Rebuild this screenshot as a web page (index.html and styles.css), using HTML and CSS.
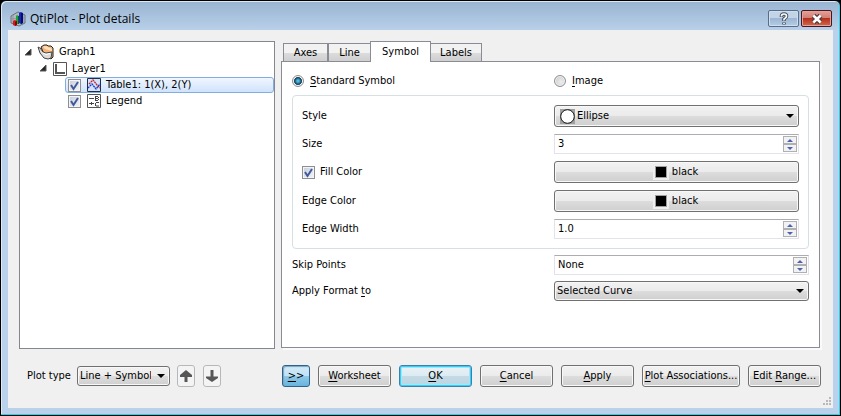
FILE: index.html
```html
<!DOCTYPE html>
<html lang="en">
<head>
<meta charset="utf-8">
<title>QtiPlot - Plot details</title>
<link rel="stylesheet" href="styles.css">
</head>
<body>
<div class="window">
  <header class="titlebar">
    <svg class="app-icon" viewBox="0 0 16 16" aria-hidden="true">
      <path d="M1 5l7-4 7 3v8l-6 3-8-3z" fill="#b4bac2" stroke="#6a7078"/>
      <path d="M3 4v8M1 8l13-1M13 4v8" fill="none" stroke="#8d949c"/>
      <path d="M9 2l2-1 2 1v10l-2 1-2-1z" fill="#1a22c8"/><path d="M11 2v11l2-1V2z" fill="#070c70"/>
      <path d="M6 5l1-1 2 1v8H6z" fill="#18a834"/><path d="M8 5h1v8H8z" fill="#0c5a1c"/>
      <path d="M3 10l2-1 2 1v4l-2 1-2-1z" fill="#dc1616"/><path d="M5 11l2-1v4l-2 1z" fill="#7d0808"/>
    </svg>
    <h1 class="title">QtiPlot - Plot details</h1>
    <button class="caption-btn" type="button" aria-label="Help">
      <svg width="12" height="14" viewBox="0 0 12 14"><path d="M3.500 5V4q0-2 2.500-2t2.500 2q0 1.500-1.500 2.200T6 8.500V9M6 10.500v2" fill="none" stroke="#4a5361" stroke-width="3.600"/><path d="M3.500 4.600V4q0-2 2.500-2t2.500 2q0 1.500-1.500 2.200T6 8.500M6 10.900v1.200" fill="none" stroke="#fff" stroke-width="1.600"/></svg>
    </button>
    <button class="caption-btn close" type="button" aria-label="Close">
      <svg width="14" height="12" viewBox="0 0 14 12"><path d="M3.500 2.500l7 7M10.500 2.500l-7 7" stroke="#50393c" stroke-width="5"/><path d="M3.300 2.500l7.400 7M10.700 2.500l-7.400 7" stroke="#fff" stroke-width="2.600"/></svg>
    </button>
  </header>

  <main class="content">
    <div class="main">
      <ul class="tree">
        <li class="node level1">
          <svg class="twisty" viewBox="0 0 7 7"><path d="M6 0v6H0z" fill="#262626" stroke="#595959"/></svg>
          <svg class="folder" viewBox="0 0 18 16"><path d="M4 3l3-2h3l1 1h3l2 2v9l-2 2-7-5z" fill="#f7b273" stroke="#222"/><path d="M6 2.500l3-.5 6 3v2L8 5z" fill="#fde0bd"/><path d="M1 3l2 1 3 4 3 1 6-1-1 6-3 1-4-1-4-5z" fill="#dcdcdc" stroke="#444"/><path d="M6 9l3 1.500 4-1" fill="none" stroke="#fff"/></svg>
          <span>Graph1</span>
        </li>
        <li class="node level2">
          <svg class="twisty" viewBox="0 0 7 7"><path d="M6 0v6H0z" fill="#262626" stroke="#595959"/></svg>
          <svg class="node-icon" viewBox="0 0 14 14"><path d="M.5.5h13v13H.5z" fill="#fff" stroke="#555"/><path d="M3 2v9h9" fill="none" stroke="#555" stroke-width="2"/></svg>
          <span>Layer1</span>
        </li>
        <li class="node level3 selected">
          <span class="check"><input type="checkbox" id="curve" checked><svg viewBox="0 0 13 13"><path d="M3 6l2.500 4L10 3" fill="none" stroke="#41599c" stroke-width="2"/></svg></span>
          <svg class="node-icon" viewBox="0 0 14 14"><path d="M.5.500h13v13H.5z" fill="#d3e4f8" stroke="#1b2f4d"/><path d="M2 6l4-4 4 5 3 3" fill="none" stroke="#d02030" stroke-width="1.300" stroke-dasharray="2 .6"/><path d="M1 10l4-4 4 5 4-5" fill="none" stroke="#2038c8" stroke-width="1.300" stroke-dasharray="2 .6"/></svg>
          <label for="curve">Table1: 1(X), 2(Y)</label>
        </li>
        <li class="node level3">
          <span class="check"><input type="checkbox" id="legend" checked><svg viewBox="0 0 13 13"><path d="M3 6l2.500 4L10 3" fill="none" stroke="#41599c" stroke-width="2"/></svg></span>
          <svg class="node-icon" viewBox="0 0 14 14"><path d="M.5.500h13v13H.5z" fill="#fff" stroke="#555"/><path d="M2 4.500h5M2 9.500h5M4.500 8v3M8.500 2v5M8 2.500h3M8 4.500h3M8 6.500h3M11.500 3v1M11.500 5v1M12 8.500H9M8.500 9v3M12 12H9" fill="none" stroke="#444"/></svg>
          <label for="legend">Legend</label>
        </li>
      </ul>

      <section class="tabs">
        <div class="tablist" role="tablist">
          <button class="tab axes" role="tab" type="button">Axes</button>
          <button class="tab line" role="tab" type="button">Line</button>
          <button class="tab active" role="tab" type="button" aria-selected="true">Symbol</button>
          <button class="tab labels" role="tab" type="button">Labels</button>
        </div>
        <div class="panel" role="tabpanel">
          <div class="row radios">
            <label class="choice"><input type="radio" name="kind" checked><span><u>S</u>tandard Symbol</span></label>
            <label class="choice"><input type="radio" name="kind"><span><u>I</u>mage</span></label>
          </div>
          <div class="group">
            <div class="row">
              <label for="style">Style</label>
              <span class="combo tall with-icon"><select id="style"><option>Ellipse</option></select>
                <svg class="shape" viewBox="0 0 15 15"><path d="M0 0h15v15H0z" fill="#a0a0a0"/><circle cx="7.500" cy="7.500" r="6.800" fill="#fff" stroke="#111"/></svg>
                <svg class="arrow" viewBox="0 0 8 4"><path d="M0 0h8L4 4z"/></svg></span>
            </div>
            <div class="row">
              <label for="size">Size</label>
              <span class="spin"><input type="text" id="size" value="3"><span class="steps"><button type="button" aria-label="Increase size"><svg viewBox="0 0 6 3"><path d="M0 3h6L3 0z"/></svg></button><button type="button" aria-label="Decrease size"><svg viewBox="0 0 6 3"><path d="M0 0h6L3 3z"/></svg></button></span></span>
            </div>
            <div class="row">
              <span class="fill"><span class="check"><input type="checkbox" id="fill" checked><svg viewBox="0 0 13 13"><path d="M3 6l2.500 4L10 3" fill="none" stroke="#41599c" stroke-width="2"/></svg></span><label for="fill">Fill Color</label></span>
              <button class="btn color" type="button"><span class="swatch"></span>black</button>
            </div>
            <div class="row">
              <label for="edge">Edge Color</label>
              <button class="btn color" id="edge" type="button"><span class="swatch"></span>black</button>
            </div>
            <div class="row">
              <label for="width">Edge Width</label>
              <span class="spin"><input type="text" id="width" value="1.0"><span class="steps"><button type="button" aria-label="Increase width"><svg viewBox="0 0 6 3"><path d="M0 3h6L3 0z"/></svg></button><button type="button" aria-label="Decrease width"><svg viewBox="0 0 6 3"><path d="M0 0h6L3 3z"/></svg></button></span></span>
            </div>
          </div>
          <div class="row">
            <label for="skip">Skip Points</label>
            <span class="spin"><input type="text" id="skip" value="None"><span class="steps"><button type="button" aria-label="Skip more"><svg viewBox="0 0 6 3"><path d="M0 3h6L3 0z"/></svg></button><button type="button" aria-label="Skip fewer"><svg viewBox="0 0 6 3"><path d="M0 0h6L3 3z"/></svg></button></span></span>
          </div>
          <div class="row">
            <label for="apply-to">Apply Format <u>t</u>o</label>
            <span class="combo"><select id="apply-to"><option>Selected Curve</option></select><svg class="arrow" viewBox="0 0 8 4"><path d="M0 0h8L4 4z"/></svg></span>
          </div>
        </div>
      </section>
    </div>

    <footer class="footer">
      <div class="plot-type">
        <label for="type">Plot type</label>
        <span class="combo"><select id="type"><option>Line + Symbol</option></select><svg class="arrow" viewBox="0 0 8 4"><path d="M0 0h8L4 4z"/></svg></span>
        <button class="move" type="button" aria-label="Move up"><svg viewBox="0 0 12 12"><path d="M6 0l6 5v2H7.500v5h-3V7H0V5z" fill="#565656"/></svg></button>
        <button class="move" type="button" aria-label="Move down"><svg viewBox="0 0 12 12"><path d="M6 12l6-4V6.500H7.500V0h-3v6.500H0V8z" fill="#565656"/></svg></button>
      </div>
      <div class="actions">
        <button class="btn toggle" type="button"><span><u>&gt;</u>&gt;</span></button>
        <button class="btn" type="button"><span><u>W</u>orksheet</span></button>
        <button class="btn default" type="button"><span><u>O</u>K</span></button>
        <button class="btn" type="button"><span><u>C</u>ancel</span></button>
        <button class="btn" type="button"><span><u>A</u>pply</span></button>
        <button class="btn wide" type="button"><span><u>P</u>lot Associations...</span></button>
        <button class="btn" type="button"><span>Edit <u>R</u>ange...</span></button>
      </div>
    </footer>
    <svg class="grip" viewBox="0 0 9 9" aria-hidden="true"><path d="M7 1h2M4 4h2M7 4h2M1 7h2M4 7h2M7 7h2" stroke="#b8b8b8" stroke-width="2"/></svg>
  </main>
</div>
</body>
</html>
```
FILE: styles.css
```css
* { box-sizing: border-box; }

body {
  margin: 0;
  background: #000;
  color: #000;
  font: 11px/16px "DejaVu Sans Condensed", "Noto Sans", sans-serif;
}

button, input, select { margin: 0; font: inherit; color: inherit; }
svg { display: block; flex: none; }
u { text-underline-offset: 2px; }

.window {
  display: flex;
  flex-direction: column;
  min-height: 100vh;
  padding: 0 6px 6px;
  border: 1px solid #000;
  border-radius: 6px 6px 0 0;
  background: linear-gradient(#99b4d1, #b9d1ea 30px);
  box-shadow: inset -1px -1px #27d3ea, inset 1px 1px #dce9f6;
}

.titlebar {
  display: flex;
  align-items: center;
  height: 29px;
  padding: 6px 2px 0 3px;
}
.app-icon { width: 16px; height: 16px; }
.title {
  flex: 1;
  margin: 0 0 0 4px;
  font: 12px/16px "Open Sans", "Noto Sans", sans-serif;
}
.caption-btn {
  display: flex;
  align-items: center;
  justify-content: center;
  width: 31px;
  height: 17px;
  margin-left: 2px;
  padding: 0;
  border: 1px solid #586d89;
  border-radius: 2px;
  background: linear-gradient(#c3d4e8 50%, #9cb6d3 50%, #b5cde5);
  box-shadow: inset 0 0 0 1px #cfdfee;
}
.caption-btn.close {
  border-color: #4a1520;
  background: linear-gradient(#e3a098, #d27b70 50%, #b5301c 50%, #cf6a4e);
  box-shadow: inset 0 0 0 1px #e2a39b;
}

.content {
  position: relative;
  flex: 1;
  display: flex;
  flex-direction: column;
  margin: 0 1px 1px;
  padding: 11px 13px 21px 11px;
  background: #f0f0f0;
}
.main { flex: 1; display: flex; gap: 6px; }

.tree {
  width: 256px;
  margin: 0;
  padding: 2px 0;
  border: 1px solid #828790;
  background: #fff;
  list-style: none;
}
.node { display: flex; align-items: center; height: 16px; border: 1px solid transparent; }
.twisty { width: 7px; height: 7px; }
.level1 { padding-left: 4px; }
.level2 { padding-left: 19px; height: 17px; }
.level3 { margin-left: 45px; padding-left: 2px; }
.folder { width: 18px; height: 16px; margin: 0 4px 0 5px; }
.node-icon { width: 14px; height: 14px; margin: 0 5px 0 6px; }
.selected {
  border-color: #84acdd;
  border-radius: 3px;
  background: linear-gradient(#f0f6fe, #cfe3fc);
}

.check { position: relative; width: 13px; height: 13px; flex: none; }
.check input {
  display: block;
  appearance: none;
  width: 13px;
  height: 13px;
  border: 1px solid #8e8f8f;
  background: linear-gradient(135deg, #c5cddb, #f4f5f8);
  box-shadow: inset 0 0 0 1px #f4f4f4;
}
.check svg { position: absolute; inset: 0; pointer-events: none; }

.tabs { flex: 1; display: flex; flex-direction: column; margin-bottom: 1px; }
.tablist { display: flex; align-items: flex-end; height: 21px; margin: 0 0 -1px 2px; z-index: 1; }
.tab {
  height: 19px;
  padding: 0;
  border: 1px solid #898c95;
  background: linear-gradient(#f2f2f2 50%, #dddddd 50%, #cfcfcf);
}
.axes { width: 46px; border-right-width: 2px; }
.line { width: 42px; border-left: 0; }
.labels { width: 51px; border-left: 0; }
.tab.active { width: 61px; height: 21px; margin-left: -1px; padding-bottom: 1px; border-bottom: 0; background: #fff; }

.panel {
  flex: 1;
  padding: 11px 10px;
  border: 1px solid #898c95;
  background: #fff;
  box-shadow: 2px 2px #fafafa;
}
.row { display: grid; grid-template-columns: 262px 1fr; align-items: center; margin-top: 6px; }
.radios { margin: 0; }
.choice { display: flex; align-items: center; gap: 6px; }
.choice input {
  appearance: none;
  width: 12px;
  height: 12px;
  border: 1px solid #8e8f8f;
  border-radius: 50%;
  background: radial-gradient(circle at 60% 60%, #eeeeee, #c4c4c4);
  box-shadow: inset 0 0 0 1px #f4f4f4;
}
.choice input:checked { background: radial-gradient(circle, #52b8dc 1px, #12557a 3px, #1b3446 4px, #ececec 4px); }

.group {
  display: grid;
  gap: 7px;
  margin: 6px 0 6px;
  padding: 9px;
  border: 1px solid #d5dfe5;
  border-radius: 4px;
}
.group .row { grid-template-columns: 252px 1fr; margin: 0; }
.fill { display: flex; align-items: center; gap: 5px; }

.combo { position: relative; display: block; }
.combo select {
  display: block;
  appearance: none;
  width: 100%;
  height: 20px;
  padding: 0 18px 0 2px;
  border: 1px solid #707070;
  border-radius: 3px;
  background: linear-gradient(#f2f2f2, #ebebeb 50%, #dddddd 50%, #cfcfcf);
  box-shadow: inset 0 0 0 1px #f8f8f8;
}
.combo.tall select { height: 22px; }
.combo.with-icon select { padding-left: 22px; }
.shape { position: absolute; left: 6px; top: 4px; width: 15px; height: 15px; pointer-events: none; }
.arrow { position: absolute; right: 5px; top: 50%; width: 8px; height: 4px; margin-top: -2px; pointer-events: none; }

.spin {
  display: flex;
  height: 20px;
  padding: 1px;
  border: 1px solid #e2e3ea;
  border-top-color: #abadb3;
  background: #fff;
}
.spin input { flex: 1; min-width: 0; padding: 0 2px; border: 0; background: none; }
.steps { display: flex; flex-direction: column; width: 14px; }
.steps button {
  flex: 1;
  display: flex;
  align-items: center;
  justify-content: center;
  padding: 0;
  border: 1px solid #b0b0b4;
  background: #f2f2f2;
}
.steps svg { width: 6px; height: 3px; fill: #4c62b0; }

.btn {
  display: flex;
  align-items: center;
  justify-content: center;
  width: 73px;
  height: 22px;
  padding: 0;
  border: 1px solid #707070;
  border-radius: 3px;
  background: linear-gradient(#f2f2f2, #ebebeb 50%, #dddddd 50%, #cfcfcf);
  box-shadow: inset 0 0 0 1px #f8f8f8;
  white-space: nowrap;
}
.color { width: auto; gap: 5px; }
.swatch { width: 12px; height: 12px; border: 1px solid #a0a0a0; background: #000; box-shadow: 0 0 0 2px #efefef; }
.default {
  border-color: #3c7fb1;
  background: linear-gradient(#eaf2f6, #dcebf2 50%, #c4dbe6 50%, #bbd5e2);
  box-shadow: inset 0 0 0 1px #2fd2f8, inset 0 0 0 2px #a8e4f6;
}
.toggle {
  width: 28px;
  border-color: #2c628b;
  background: linear-gradient(#d3eaf7, #c0e1f4 50%, #90c8e8 50%, #68b3dc);
  box-shadow: inset 1px 1px 1px #7aa5c0;
}
.wide { width: 98px; }

.footer { display: flex; gap: 8px; margin: 16px -1px 0 0; }
.plot-type { display: flex; align-items: center; width: 255px; padding-left: 8px; }
.plot-type label { width: 50px; white-space: nowrap; }
.plot-type .combo { width: 93px; }
.move {
  display: flex;
  align-items: center;
  justify-content: center;
  width: 18px;
  height: 22px;
  margin-left: 7px;
  padding: 0;
  border: 1px solid #b6b9bb;
  border-radius: 3px;
  background: #f4f4f4;
}
.move + .move { margin-left: 8px; }
.move svg { width: 12px; height: 12px; }
.actions { flex: 1; display: flex; justify-content: space-between; }
.grip { position: absolute; right: 2px; bottom: 2px; width: 9px; height: 9px; }
```
